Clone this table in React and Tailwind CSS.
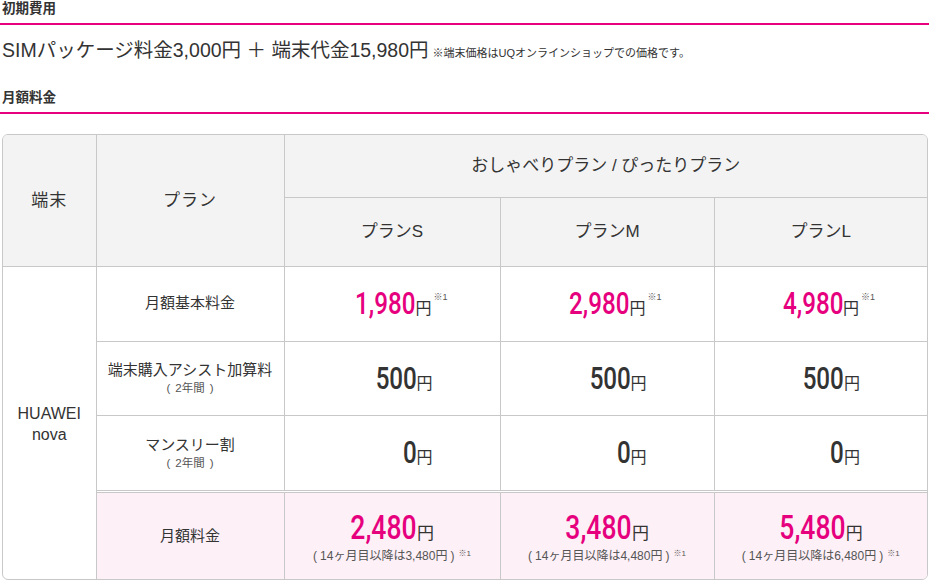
const PINK = "text-[#e6007e]";
const DIGITS = "font-['Roboto',sans-serif] font-medium";

const Num = ({ value, pink, note }) => (
	<div className="flex items-baseline justify-end pr-[67px]">
		<span className={`inline-block origin-right scale-x-[0.78] ${DIGITS} text-[31px] leading-none ${pink ? PINK : "text-[#333]"}`}>
			{value}
		</span>
		<span className="text-[16px] leading-none text-[#333]">円</span>
		{note && <span className="self-start text-[9px] leading-none text-[#555] ml-[2px] mr-[-15px] mt-[5px]">※1</span>}
	</div>
);

const Total = ({ value, after }) => (
	<div className="flex flex-col items-center">
		<div className="flex items-baseline">
			<span className={`inline-block mx-[-9px] scale-x-[0.78] ${DIGITS} text-[34px] leading-none ${PINK}`}>{value}</span>
			<span className="text-[17px] leading-none text-[#333]">円</span>
		</div>
		<div className="mt-[6px] text-[12px] leading-none text-[#555]">
			<span className="mr-[3px]">(</span>14ヶ月目以降は{after}円<span className="ml-[3px] mr-[4px]">)</span>
			<span className="text-[8px] align-top">※1</span>
		</div>
	</div>
);

const Sub = () => (
	<div className="flex justify-center gap-[5px] text-[11.5px] leading-[16px] text-[#555]">
		<span>(</span>
		<span>2年間</span>
		<span>)</span>
	</div>
);

const cell = "border border-[#c8c8c8]";

export default function App() {
	return (
		<div className="w-[929px] bg-white text-[#333] font-['Liberation_Sans','Noto_Sans_CJK_JP',sans-serif]">
			<h2 className="text-[13.5px] font-bold leading-[18px] pl-[2px] pb-[5px] border-b-2 border-[#e6007e]">初期費用</h2>
			<p className="mt-[11px] pl-[2px] text-[19.5px] leading-[28px]">
				SIMパッケージ料金3,000円 ＋ 端末代金15,980円
				<span className="ml-[4px] text-[11px]">※端末価格はUQオンラインショップでの価格です。</span>
			</p>
			<h2 className="mt-[22px] text-[13.5px] font-bold leading-[18px] pl-[2px] pb-[5px] border-b-2 border-[#e6007e]">月額料金</h2>

			<div className="mt-[20px] ml-[2px] w-[926px] rounded-[6px] border border-[#c8c8c8] overflow-hidden">
				<table className="w-full border-collapse border-hidden text-center">
					<thead className="bg-[#f3f3f3]">
						<tr>
							<th rowSpan={2} className={`${cell} w-[93px] text-[17px] font-normal tracking-[1px]`}>端末</th>
							<th rowSpan={2} className={`${cell} w-[188px] text-[17px] font-normal tracking-[1px]`}>プラン</th>
							<th colSpan={3} className={`${cell} h-[62px] text-[17px] font-normal`}>おしゃべりプラン / ぴったりプラン</th>
						</tr>
						<tr>
							<th className={`${cell} w-[216px] h-[69px] text-[17px] font-normal`}>プランS</th>
							<th className={`${cell} w-[214px] text-[17px] font-normal`}>プランM</th>
							<th className={`${cell} text-[17px] font-normal`}>プランL</th>
						</tr>
					</thead>
					<tbody>
						<tr>
							<td rowSpan={5} className={`${cell} text-[16px] leading-[21px] pt-[2px]`}>
								HUAWEI
								<br />
								nova
							</td>
							<td className={`${cell} h-[75px] text-[15px]`}>月額基本料金</td>
							<td className={cell}><Num value="1,980" pink note /></td>
							<td className={cell}><Num value="2,980" pink note /></td>
							<td className={cell}><Num value="4,980" pink note /></td>
						</tr>
						<tr>
							<td className={`${cell} h-[74px] text-[15px] leading-[20px]`}>
								端末購入アシスト加算料
								<Sub />
							</td>
							<td className={cell}><Num value="500" /></td>
							<td className={cell}><Num value="500" /></td>
							<td className={cell}><Num value="500" /></td>
						</tr>
						<tr>
							<td className={`${cell} h-[75px] text-[15px] leading-[20px]`}>
								マンスリー割
								<Sub />
							</td>
							<td className={cell}><Num value="0" /></td>
							<td className={cell}><Num value="0" /></td>
							<td className={cell}><Num value="0" /></td>
						</tr>
						<tr>
							<td colSpan={4} className={`${cell} h-[2px] p-0 bg-white`}></td>
						</tr>
						<tr className="bg-[#fdf0f7]">
							<td className={`${cell} h-[87px] text-[15px]`}>月額料金</td>
							<td className={cell}><Total value="2,480" after="3,480" /></td>
							<td className={cell}><Total value="3,480" after="4,480" /></td>
							<td className={cell}><Total value="5,480" after="6,480" /></td>
						</tr>
					</tbody>
				</table>
			</div>
		</div>
	);
}
